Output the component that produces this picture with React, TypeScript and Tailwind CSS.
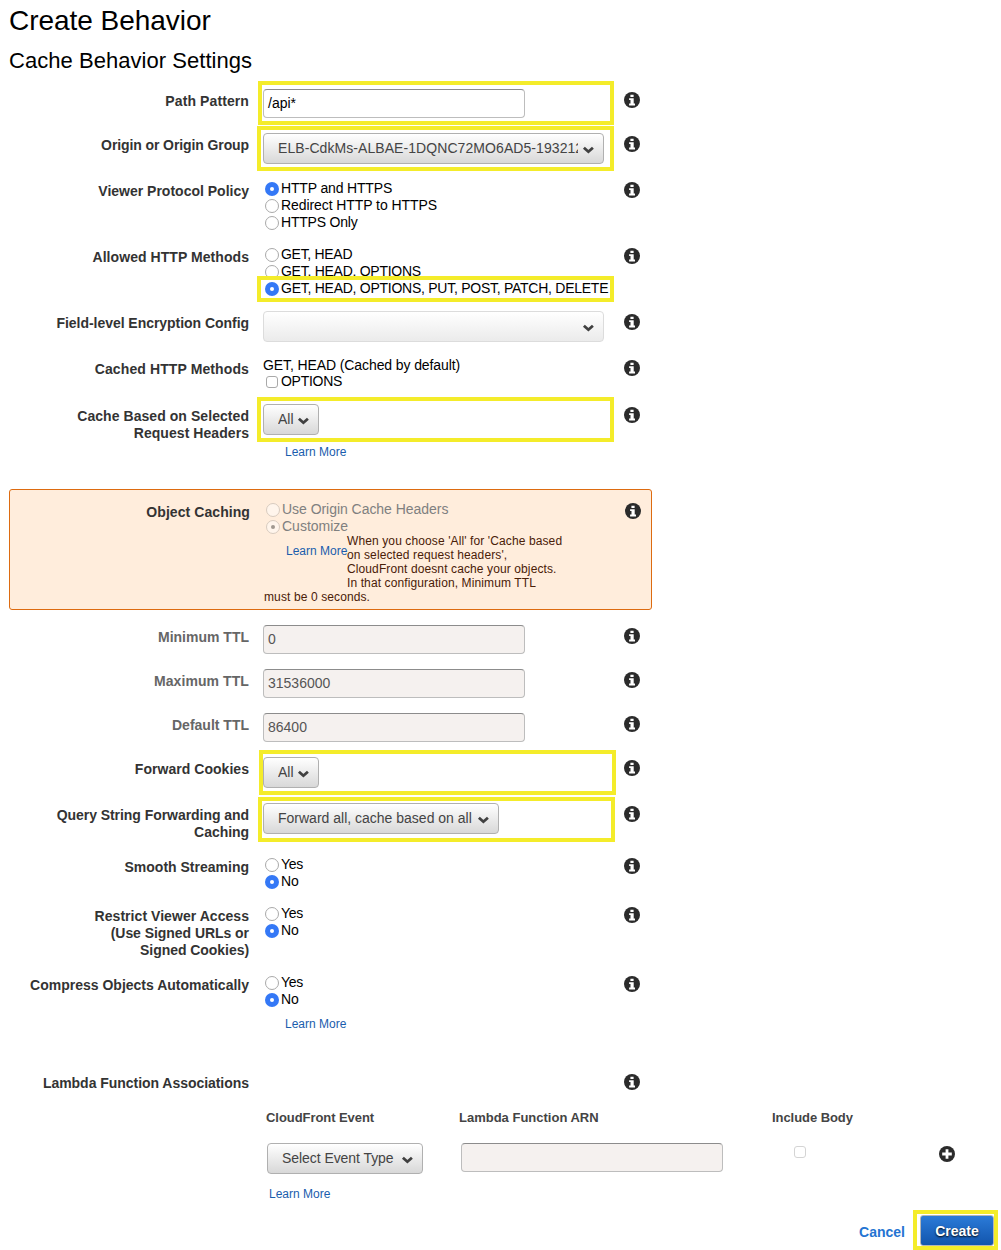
import type { ReactNode } from "react";

function InfoIcon() {
  return (
    <svg viewBox="0 0 16 16" className="size-4">
      <circle cx="8" cy="8" r="8" fill="#2b2b2b" />
      <path fill="#fff" d="M6.400 2.700h3.200v2.400H6.400zM5.100 6.300h4.600v5.300h1.300v1.800H5.100v-1.800h1.400V8.100H5.100z" />
    </svg>
  );
}

function PlusIcon() {
  return (
    <svg viewBox="0 0 16 16" className="size-4">
      <circle cx="8" cy="8" r="8" fill="#2b2b2b" />
      <path fill="#fff" d="M6.600 3.200h2.800v3.400h3.400v2.800H9.400v3.400H6.600V9.400H3.200V6.600h3.400z" />
    </svg>
  );
}

function Row({
  label,
  height,
  muted,
  track = "",
  children,
}: {
  label: ReactNode;
  height: string;
  muted?: boolean;
  track?: string;
  children?: ReactNode;
}) {
  return (
    <div className={`relative flex ${height}`}>
      <div
        className={`w-[240px] shrink-0 pt-1 text-right font-bold leading-[17px] whitespace-nowrap ${track} ${muted ? "text-[#666]" : "text-[#333]"}`}
      >
        {label}
      </div>
      <div className="ml-[14px] w-[361px] shrink-0">{children}</div>
      <div className="pt-[3.400px]">
        <InfoIcon />
      </div>
    </div>
  );
}

function Highlight({ className }: { className: string }) {
  return <div className={`pointer-events-none absolute border-4 border-[#f4ec2a] ${className}`} />;
}

function Radio({
  children,
  on,
  disabled,
  track = "",
}: {
  children: ReactNode;
  on?: boolean;
  disabled?: boolean;
  track?: string;
}) {
  const ring = disabled
    ? "border border-[#d8cbbf] bg-[#fff5ec]"
    : on
      ? "bg-[#3478f6]"
      : "border border-[#a9a9a9] bg-white";
  const dot = disabled ? "bg-[#a09890]" : "bg-white";
  return (
    <div className="flex h-[17px] items-center whitespace-nowrap pl-[2px]">
      <span
        className={`mr-[2px] flex size-[14px] shrink-0 items-center justify-center rounded-full ${disabled ? "mt-px" : "mt-[2px]"} ${ring}`}
      >
        {on && <span className={`size-1 rounded-full ${dot}`} />}
      </span>
      <span className={`${track} ${disabled ? "text-[#808080]" : "pt-[2px] text-black"}`}>{children}</span>
    </div>
  );
}

function Chevron() {
  return (
    <svg viewBox="0 0 12 8" className="mt-[3px] h-2 w-3 shrink-0 fill-none stroke-[#404040] stroke-[2.8]">
      <path d="M1.900 1.700 6.400 5.700l4.500-4" />
    </svg>
  );
}

function Select({ children, className, faded }: { children?: ReactNode; className: string; faded?: boolean }) {
  return (
    <div
      className={`flex h-[31px] items-center justify-between rounded-[4px] border bg-linear-to-b pr-[9px] pl-[14px] text-[#444] ${className} ${faded ? "border-[#dcdcdc] from-white to-[#ebebeb]" : "border-[#b0b0b0] from-white to-[#d8d8d8]"}`}
    >
      <span className="overflow-hidden whitespace-nowrap">{children}</span>
      <Chevron />
    </div>
  );
}

function Field({ children, readOnly }: { children?: ReactNode; readOnly?: boolean }) {
  return (
    <div
      className={`flex h-[29px] w-[262px] items-center rounded-[4px] border border-[#bdbdbd] border-t-[#8c8c8c] px-1 ${readOnly ? "bg-[#f5f1ef] text-[#555]" : "bg-white text-black"}`}
    >
      {children}
    </div>
  );
}

function LearnMore({ className }: { className?: string }) {
  return (
    <div className={`text-[12px] leading-[14px] tracking-normal whitespace-nowrap text-[#1a5dad] ${className}`}>
      Learn More
    </div>
  );
}

export default function App() {
  return (
    <div className="h-[1250px] w-[1001px] overflow-hidden bg-white pl-[9px] font-['Liberation_Sans',Arial,sans-serif] text-[14px] leading-[17px]">
      <h1 className="h-[45px] pt-1 text-[28px] leading-[34px] tracking-[-0.04px] text-black">Create Behavior</h1>
      <h2 className="h-[44px] pt-[2px] text-[22px] leading-[27px] tracking-[0.04px] text-black">
        Cache Behavior Settings
      </h2>

      <Row label="Path Pattern" height="h-[44px]" track="tracking-[0.1px]">
        <Field>/api*</Field>
        <Highlight className="-top-2 left-[249px] h-[44px] w-[356px]" />
      </Row>
      <Row label="Origin or Origin Group" height="h-[46px]" track="tracking-[-0.1px]">
        <Select className="w-[341px]">
          <span className="block w-[300px] overflow-hidden tracking-[0.07px]">ELB-CdkMs-ALBAE-1DQNC72MO6AD5-193212</span>
        </Select>
        <Highlight className="-top-[7px] left-[248px] h-[45px] w-[357px]" />
      </Row>
      <Row label="Viewer Protocol Policy" height="h-[66px]">
        <Radio on track="tracking-[-0.16px]">
          HTTP and HTTPS
        </Radio>
        <Radio track="tracking-[-0.08px]">Redirect HTTP to HTTPS</Radio>
        <Radio track="tracking-[-0.2px]">HTTPS Only</Radio>
      </Row>
      <Row label="Allowed HTTP Methods" height="h-[66px]" track="tracking-[0.06px]">
        <Radio track="tracking-[-0.3px]">GET, HEAD</Radio>
        <Radio track="tracking-[-0.27px]">GET, HEAD, OPTIONS</Radio>
        <Radio on track="tracking-[-0.26px]">
          GET, HEAD, OPTIONS, PUT, POST, PATCH, DELETE
        </Radio>
        <Highlight className="top-[31px] left-[248px] h-[26px] w-[357px]" />
      </Row>
      <Row label="Field-level Encryption Config" height="h-[46px]" track="tracking-[-0.04px]">
        <Select faded className="w-[341px]" />
      </Row>
      <Row label="Cached HTTP Methods" height="h-[47px]" track="tracking-[0.11px]">
        <div className="leading-4 tracking-[-0.1px]">GET, HEAD (Cached by default)</div>
        <div className="flex h-4 items-center pl-[3px] leading-4 tracking-[-0.28px]">
          <span className="mt-[2px] mr-[3px] size-3 rounded-[3px] border border-[#a9a9a9] bg-white" />
          OPTIONS
        </div>
      </Row>
      <Row
        label={
          <>
            Cache Based on Selected
            <br />
            Request Headers
          </>
        }
        height="h-[85px]"
        track="tracking-[0.06px]"
      >
        <Select className="w-[56px]">All</Select>
        <LearnMore className="mt-[10px] ml-[22px]" />
        <Highlight className="-top-[7px] left-[248px] h-[45px] w-[357px]" />
      </Row>

      <div className="h-[121px] w-[643px] rounded-[3px] border border-[#dd6b10] bg-[#ffeddc] pt-[10px]">
        <Row label="Object Caching" height="h-[100px]" track="tracking-[0.07px]">
          <div className="pt-px">
            <Radio disabled track="tracking-[-0.04px]">
              Use Origin Cache Headers
            </Radio>
            <Radio disabled on>
              Customize
            </Radio>
          </div>
          <div className="-mt-px text-[12px] leading-[14px] tracking-[0.11px] whitespace-nowrap text-[#4a2008]">
            <div className="flex">
              <LearnMore className="mt-[10px] ml-[22px] w-[61px]" />
              <div>
                When you choose 'All' for 'Cache based
                <br />
                on selected request headers',
                <br />
                CloudFront doesnt cache your objects.
                <br />
                In that configuration, Minimum TTL
              </div>
            </div>
            must be 0 seconds.
          </div>
        </Row>
      </div>

      <div className="mt-[15px]">
        <Row label="Minimum TTL" height="h-[44px]" muted>
          <Field readOnly>0</Field>
        </Row>
        <Row label="Maximum TTL" height="h-[44px]" muted track="tracking-[0.08px]">
          <Field readOnly>31536000</Field>
        </Row>
        <Row label="Default TTL" height="h-[44px]" muted>
          <Field readOnly>86400</Field>
        </Row>
        <Row label="Forward Cookies" height="h-[46px]" track="tracking-[0.04px]">
          <Select className="w-[56px]">All</Select>
          <Highlight className="-top-[7px] left-[250px] h-[45px] w-[357px]" />
        </Row>
        <Row
          label={
            <>
              Query String Forwarding and
              <br />
              Caching
            </>
          }
          height="h-[52px]"
          track="tracking-[-0.05px]"
        >
          <Select className="w-[236px]">Forward all, cache based on all</Select>
          <Highlight className="-top-[6px] left-[249px] h-[45px] w-[357px]" />
        </Row>
        <Row label="Smooth Streaming" height="h-[49px]">
          <Radio track="tracking-[-0.3px]">Yes</Radio>
          <Radio on>No</Radio>
        </Row>
        <Row
          label={
            <>
              <span className="tracking-[0.05px]">Restrict Viewer Access</span>
              <br />
              (Use Signed URLs or
              <br />
              Signed Cookies)
            </>
          }
          height="h-[69px]"
          track="tracking-[-0.05px]"
        >
          <Radio track="tracking-[-0.3px]">Yes</Radio>
          <Radio on>No</Radio>
        </Row>
        <Row label="Compress Objects Automatically" height="h-[98px]">
          <Radio track="tracking-[-0.3px]">Yes</Radio>
          <Radio on>No</Radio>
          <LearnMore className="mt-[10px] ml-[22px]" />
        </Row>
        <Row label="Lambda Function Associations" height="h-[40px]" track="tracking-[-0.04px]" />
      </div>

      <div className="ml-[257px] grid grid-cols-[193px_313px_167px_1fr] text-[#444]">
        <div className="h-[32px] text-[13px] leading-[14px] font-bold tracking-[-0.06px]">CloudFront Event</div>
        <div className="text-[13px] leading-[14px] font-bold">Lambda Function ARN</div>
        <div className="text-[13px] leading-[14px] font-bold tracking-[-0.06px]">Include Body</div>
        <div />
        <div className="pl-px">
          <Select className="w-[156px]">
            <span className="tracking-[-0.06px]">Select Event Type</span>
          </Select>
          <LearnMore className="mt-[13px] ml-[2px]" />
        </div>
        <div className="pl-[2px]">
          <Field readOnly />
        </div>
        <div className="pt-[3px] pl-[22px]">
          <div className="size-3 rounded-[3px] border border-[#d4d4d4] bg-white" />
        </div>
        <div className="pt-[3px]">
          <PlusIcon />
        </div>
      </div>

      <div className="mt-[9px] flex justify-end pr-[3px]">
        <span className="mt-[14px] mr-2 text-[14px] font-bold text-[#2474d2]">Cancel</span>
        <div className="h-[40px] w-[85px] border-4 border-[#f4ec2a] pt-px pl-[3px]">
          <div className="flex h-[31px] w-[74px] items-center justify-center rounded-[3px] border border-[#b5b5b5] bg-linear-to-b from-[#2b7bd8] to-[#1255ad] pt-px font-bold text-white [text-shadow:0_1px_2px_#000]">
            Create
          </div>
        </div>
      </div>
    </div>
  );
}
